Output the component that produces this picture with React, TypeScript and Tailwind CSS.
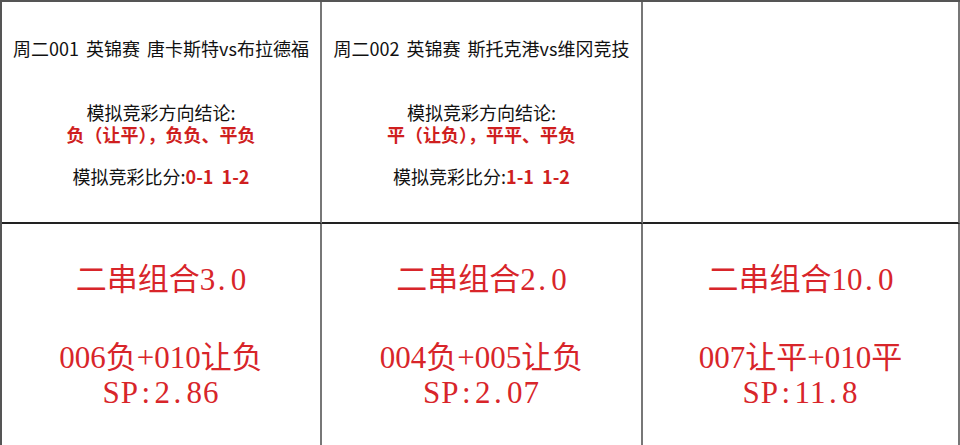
import React from "react";

type Match = {
  title: string;
  dir: string;
  score: string;
};

type Combo = {
  name: string;
  pick: string;
  sp: string;
};

const matches: (Match | null)[] = [
  { title: "周二001 英锦赛 唐卡斯特vs布拉德福", dir: "负（让平），负负、平负", score: "0-1 1-2" },
  { title: "周二002 英锦赛 斯托克港vs维冈竞技", dir: "平（让负），平平、平负", score: "1-1 1-2" },
  null,
];

const combos: Combo[] = [
  { name: "二串组合3.0", pick: "006负+010让负", sp: "SP:2.86" },
  { name: "二串组合2.0", pick: "004负+005让负", sp: "SP:2.07" },
  { name: "二串组合10.0", pick: "007让平+010平", sp: "SP:11.8" },
];

const topFont = { fontFamily: '"Noto Sans CJK SC", "Liberation Sans", sans-serif' };
const bigFont = { fontFamily: '"Liberation Serif", "Noto Sans CJK SC", serif' };

// 宋体里的 . 和 : 是半角宽，这里把它们撑到 0.5em
function Wide({ text }: { text: string }) {
  return (
    <>
      {text.split(/([.:])/).map((part, i) =>
        part === "." || part === ":" ? (
          <span key={i} className="inline-block w-[0.5em] pl-[0.08em] text-left">
            {part}
          </span>
        ) : (
          <React.Fragment key={i}>{part}</React.Fragment>
        )
      )}
    </>
  );
}

export default function App() {
  return (
    <div className="w-[960px] h-[445px] overflow-hidden bg-white">
      <div className="grid grid-cols-[320px_321px_1fr] grid-rows-[222px_230px] border-t-2 border-l-2 border-[#555]">
        {/* 上段：比赛 + 模拟结论 */}
        {matches.map((m, i) => (
          <div key={i} className="border-r-2 border-r-[#777] border-b-2 border-b-[#222]">
            {m && (
              <div className="flex flex-col items-center pt-[36px] text-[18px] leading-[21px] text-[#111]" style={topFont}>
                <div className="whitespace-nowrap [word-spacing:3px]">{m.title}</div>
                <div className="mt-[43px]">模拟竞彩方向结论:</div>
                <div className="mt-[1px] font-bold text-[#cf1f1f]">{m.dir}</div>
                <div className="mt-[21px] [word-spacing:4px]">
                  模拟竞彩比分:<span className="font-bold text-[#cf1f1f]">{m.score}</span>
                </div>
              </div>
            )}
          </div>
        ))}

        {/* 下段：二串组合 */}
        {combos.map((c, i) => (
          <div key={i} className="border-r-2 border-r-[#777]">
            <div className="flex flex-col items-center pt-[38px] text-[31px] leading-[35px] text-[#d8252a]" style={bigFont}>
              <div className="whitespace-nowrap"><Wide text={c.name} /></div>
              <div className="mt-[43px] whitespace-nowrap">{c.pick}</div>
              <div className="whitespace-nowrap tracking-[1px]"><Wide text={c.sp} /></div>
            </div>
          </div>
        ))}
      </div>
    </div>
  );
}
